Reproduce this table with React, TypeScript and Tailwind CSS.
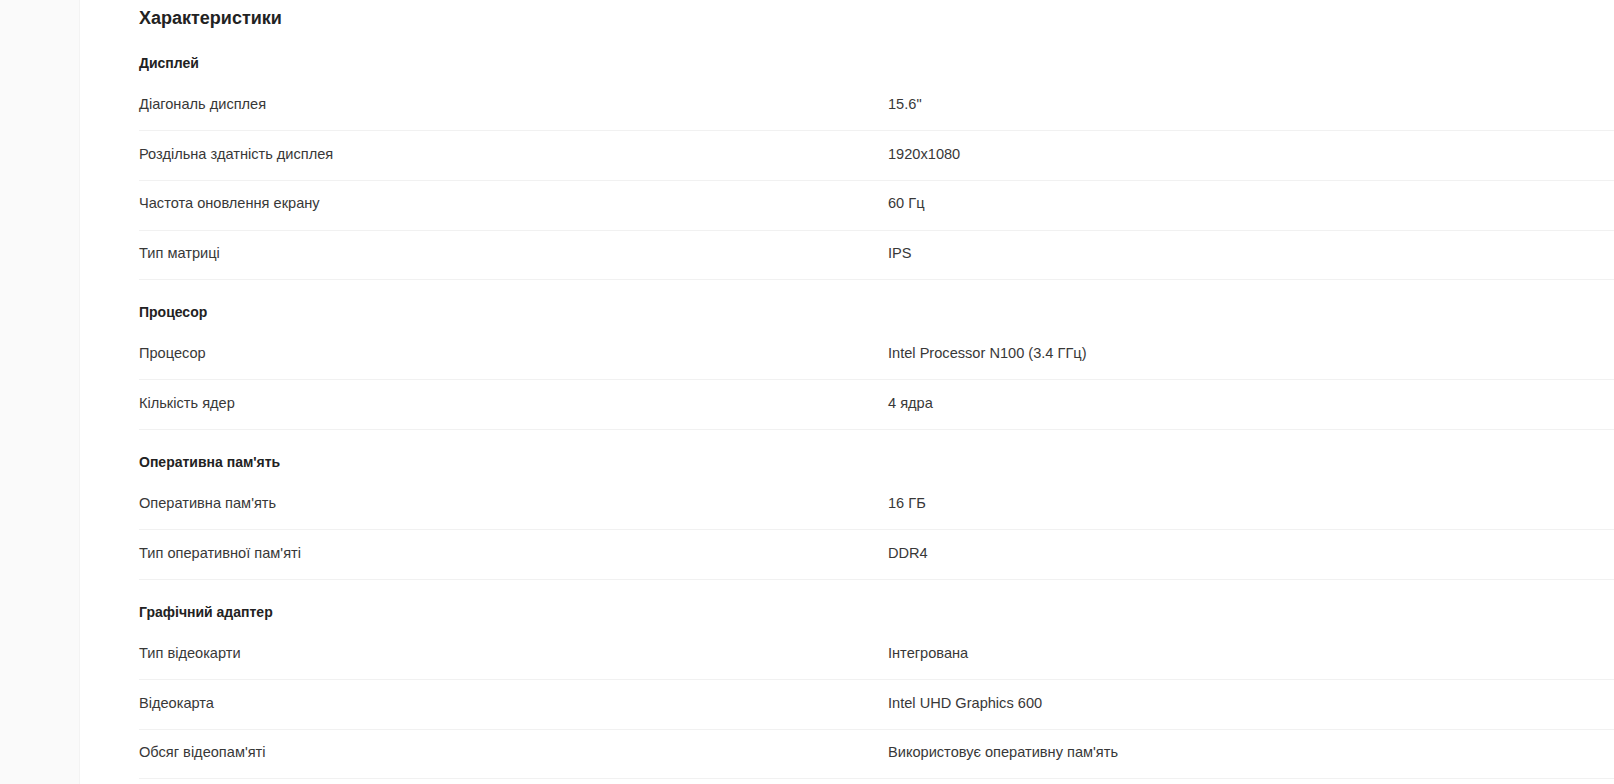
const specs: { title: string; rows: [string, string][] }[] = [
  {
    title: "Дисплей",
    rows: [
      ["Діагональ дисплея", "15.6\""],
      ["Роздільна здатність дисплея", "1920x1080"],
      ["Частота оновлення екрану", "60 Гц"],
      ["Тип матриці", "IPS"],
    ],
  },
  {
    title: "Процесор",
    rows: [
      ["Процесор", "Intel Processor N100 (3.4 ГГц)"],
      ["Кількість ядер", "4 ядра"],
    ],
  },
  {
    title: "Оперативна пам'ять",
    rows: [
      ["Оперативна пам'ять", "16 ГБ"],
      ["Тип оперативної пам'яті", "DDR4"],
    ],
  },
  {
    title: "Графічний адаптер",
    rows: [
      ["Тип відеокарти", "Інтегрована"],
      ["Відеокарта", "Intel UHD Graphics 600"],
      ["Обсяг відеопам'яті", "Використовує оперативну пам'ять"],
    ],
  },
];

export default function App() {
  return (
    <div
      className="flex h-[784px] w-full overflow-hidden bg-white"
      style={{ fontFamily: '"Liberation Sans", Arial, sans-serif' }}
    >
      <aside className="w-[80px] shrink-0 border-r border-[#f3f3f3] bg-[#fafafa]" />

      <main className="flex-1 pl-[59px]">
        <h2 className="h-[31px] pt-[6px] text-[18px] font-bold leading-[24px] text-[#222]">
          Характеристики
        </h2>

        {specs.map((section) => (
          <section key={section.title}>
            <h3 className="h-[50.6px] pt-[24px] text-[14px] font-bold leading-[16px] text-[#222]">
              {section.title}
            </h3>
            {section.rows.map(([label, value]) => (
              <div
                key={label}
                className="grid h-[49.65px] grid-cols-[749px_1fr] items-center border-b border-[#f1f1f1] pb-[2px] text-[14.6px] text-[#383838]"
              >
                <span>{label}</span>
                <span>{value}</span>
              </div>
            ))}
          </section>
        ))}
      </main>
    </div>
  );
}
